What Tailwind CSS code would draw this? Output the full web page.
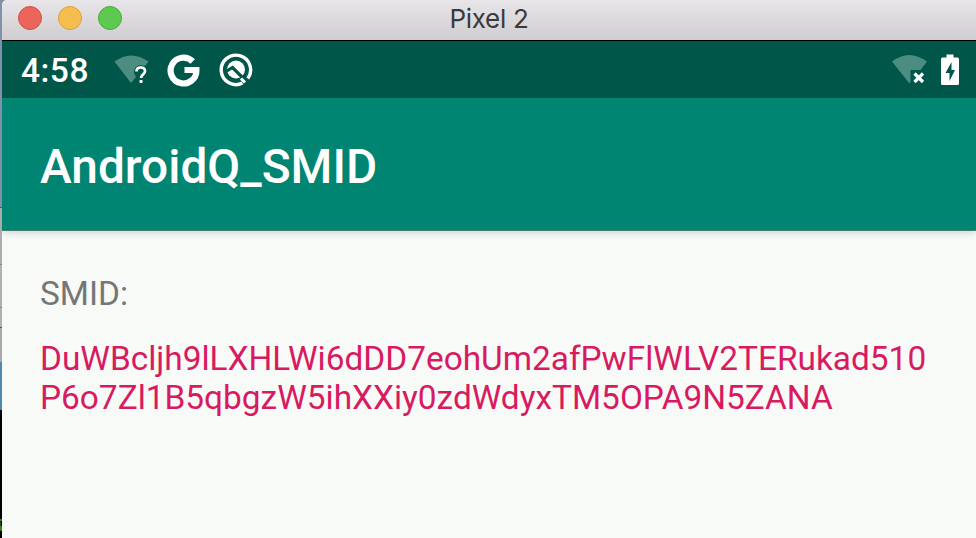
<!DOCTYPE html>
<html lang="en">
<head>
<meta charset="utf-8">
<title>Pixel 2</title>
<script src="https://cdn.jsdelivr.net/npm/@tailwindcss/browser@4"></script>
</head>
<body class="w-[976px] h-[538px] overflow-hidden flex bg-[#7f8da5] font-[Roboto,sans-serif]">
<div class="w-[2px] h-full shrink-0 flex flex-col overflow-hidden">
  <div class="h-[207px] bg-[#8291ab]"></div>
  <div class="h-[1px] bg-[#555]"></div>
  <div class="h-[56px] bg-[#ababab]"></div>
  <div class="h-[1px] bg-[#888]"></div>
  <div class="h-[42px] bg-[#b0b0b0]"></div>
  <div class="h-[1px] bg-[#888]"></div>
  <div class="h-[19px] bg-[#b0b0b0]"></div>
  <div class="h-[1px] bg-[#555]"></div>
  <div class="h-[34px] bg-[#a8a8a8]"></div>
  <div class="h-[48px] bg-[#4f87ad]"></div>
  <div class="flex-1 bg-black pt-[109px]">
    <div class="h-[2px] w-[2px] bg-[#3c7a22]"></div>
    <div class="h-[5px] w-[1px] bg-[#26500f]"></div>
    <div class="h-[5px] w-[2px] bg-[#3c7a22]"></div>
  </div>
</div>
<main class="flex-1 flex flex-col bg-[#f8faf8] rounded-tl-[5px] overflow-hidden">
  <header class="h-[41px] shrink-0 grid grid-cols-[1fr_auto_1fr] bg-linear-to-b from-[#e8e6e8] to-[#cfcdcf] border-b border-black">
    <div class="flex gap-4 pl-4 pt-[6px]">
      <span class="size-6 rounded-full bg-[#ed655a] border border-[#d3504a]"></span>
      <span class="size-6 rounded-full bg-[#f6be4f] border border-[#d9a23c]"></span>
      <span class="size-6 rounded-full bg-[#5dc950] border border-[#46ad38]"></span>
    </div>
    <h1 class="text-[26px] leading-[38px] text-[#3a393b] tracking-[-0.3px] font-[Inter,sans-serif]">Pixel 2</h1>
  </header>
  <div class="h-[57px] shrink-0 flex items-center pl-[19px] pr-[17px] bg-[#005749] text-white">
    <span class="w-[93px] text-[33.5px] leading-[57px] font-medium tracking-[0.5px] pt-[1px]">4:58</span>
    <svg class="w-[36px] h-[30px]" viewBox="0 0 36 30" fill="none">
      <path d="M0.500 6.500Q17-5.500 34.500 6.500L31 11Q20 8 20 18L22 22 17 28Z" fill="#4d8c81"/>
      <path d="M22.500 16.500Q22.500 12.500 26.700 12.500Q31 12.500 31 16.200C31 19.500 27 19.300 27 23" stroke="#fff" stroke-width="2.700"/>
      <path d="M25.600 25h2.900v3h-2.900z" fill="#fff"/>
    </svg>
    <svg class="ml-[17px] w-[34px] h-[34px]" viewBox="0 0 34 34" fill="none">
      <path d="M25.700 8.500A12.900 12.900 0 1 0 29.400 17H17.500" stroke="#fff" stroke-width="6.200"/>
    </svg>
    <svg class="ml-[18px] w-[34px] h-[34px]" viewBox="0 0 34 34" fill="none">
      <path d="M23.500 30A14.700 14.700 0 1 1 28.800 25.500" stroke="#fff" stroke-width="3.400"/>
      <circle cx="17" cy="16.500" r="9" fill="#fff"/>
      <path d="M7 18.500L13.500 14.500L26.500 27.500" stroke="#005749" stroke-width="3.200"/>
      <path d="M22 25.500L26 29.500" stroke="#fff" stroke-width="3"/>
    </svg>
    <svg class="ml-auto w-[36px] h-[32px]" viewBox="0 0 36 32" fill="none">
      <path d="M0 7.500Q17-5.500 35 7.500L28.500 16H18.500V28L17.500 29.500Z" fill="#4d8c81"/>
      <path d="M22.500 19.500L31 28M31 19.500L22.500 28" stroke="#fff" stroke-width="3.200"/>
    </svg>
    <svg class="ml-[13px] w-[18px] h-[32px]" viewBox="0 0 18 32">
      <path d="M5.500 0.500h7v3h4q1.500 0 1.500 1.500v24.500q0 1.500-1.500 1.500h-15q-1.500 0-1.500-1.500V5q0-1.500 1.500-1.500h4z" fill="#fff"/>
      <path d="M10.500 8L4.500 19h4v8l5.500-11h-3.500z" fill="#005749"/>
    </svg>
  </div>
  <div class="h-[133px] shrink-0 pl-[38px] pt-[41px] bg-[#008573] border-b border-[#3f8176] shadow-[0_2px_7px_rgba(0,0,0,0.15)]">
    <h2 class="text-[47.8px] leading-[57px] font-medium text-white whitespace-nowrap">AndroidQ_SMID</h2>
  </div>
  <section class="flex-1 pl-[38px] pt-[43px] text-[33.4px] leading-[39px]">
    <p class="text-[#757775]">SMID:</p>
    <p class="mt-[26px] text-[#d81b60] whitespace-nowrap">DuWBcljh9lLXHLWi6dDD7eohUm2afPwFlWLV2TERukad510<br>P6o7Zl1B5qbgzW5ihXXiy0zdWdyxTM5OPA9N5ZANA</p>
  </section>
</main>
</body>
</html>
